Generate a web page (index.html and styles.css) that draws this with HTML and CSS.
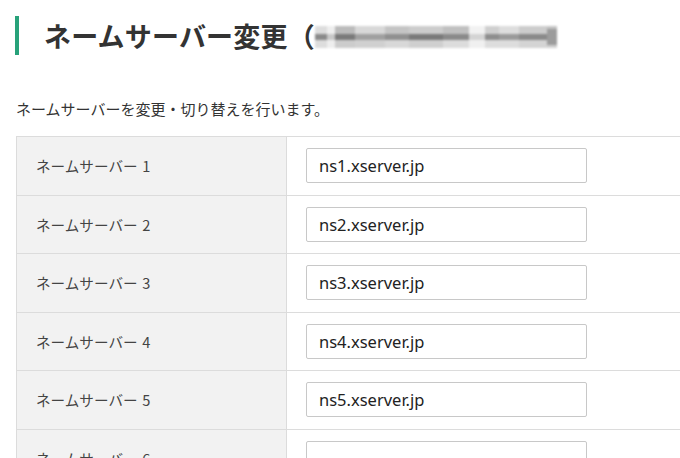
FILE: index.html
```html
<!DOCTYPE html>
<html lang="ja">
<head>
<meta charset="utf-8">
<link rel="stylesheet" href="styles.css">
</head>
<body>
<div class="page">
  <h1 class="title">
    <span class="title-text">ネームサーバー変更（</span><span class="mosaic" aria-hidden="true"><i class="m1"></i><i class="m2"></i><i class="m3"></i><i class="m4"></i><i class="m5"></i><i class="m6"></i><i class="m7"></i><i class="m8"></i><i class="m9"></i><i class="m10"></i><i class="m11"></i><i class="m12"></i></span>
  </h1>
  <p class="lead">ネームサーバーを変更・切り替えを行います。</p>
  <table class="ns-table">
    <tr><th>ネームサーバー 1</th><td><input class="ns-input" type="text" value="ns1.xserver.jp"></td></tr>
    <tr><th>ネームサーバー 2</th><td><input class="ns-input" type="text" value="ns2.xserver.jp"></td></tr>
    <tr><th>ネームサーバー 3</th><td><input class="ns-input" type="text" value="ns3.xserver.jp"></td></tr>
    <tr><th>ネームサーバー 4</th><td><input class="ns-input" type="text" value="ns4.xserver.jp"></td></tr>
    <tr><th>ネームサーバー 5</th><td><input class="ns-input" type="text" value="ns5.xserver.jp"></td></tr>
    <tr><th>ネームサーバー 6</th><td><input class="ns-input" type="text" value=""></td></tr>
  </table>
</div>
</body>
</html>
```
FILE: styles.css
```css
html, body {
  margin: 0;
  padding: 0;
  background: #fff;
  overflow: hidden;
}
body {
  font-family: "Noto Sans CJK JP", "Noto Sans", sans-serif;
  color: #333;
}
.page {
  padding: 16px 0 0 16px;
  width: 700px;
}
.title {
  margin: 0;
  display: flex;
  align-items: center;
  height: 39px;
  border-left: 4px solid #27a27a;
  margin-left: -1px;
  padding-left: 25px;
  font-size: 27px;
  font-weight: 700;
  color: #333;
  letter-spacing: 0.2px;
}
.title-text {
  line-height: 39px;
}
.mosaic {
  display: flex;
  height: 22px;
  margin-top: 2px;
  margin-left: 0;
  filter: blur(1.2px);
}
.mosaic i {
  display: block;
  height: 100%;
}
.mosaic .m1 { width: 12px; background: linear-gradient(#ddd 0 35%, #8a8a8a 35% 65%, #ddd 65%); }
.mosaic .m2 { width: 8px; background: linear-gradient(#eee 0 35%, #c8c8c8 35% 65%, #eee 65%); }
.mosaic .m3 { width: 20px; background: linear-gradient(#bbb 0 35%, #7a7a7a 35% 65%, #ccc 65%); }
.mosaic .m4 { width: 30px; background: linear-gradient(#d8d8d8 0 35%, #a0a0a0 35% 65%, #d0d0d0 65%); }
.mosaic .m5 { width: 24px; background: linear-gradient(#c4c4c4 0 35%, #909090 35% 65%, #d8d8d8 65%); }
.mosaic .m6 { width: 34px; background: linear-gradient(#ccc 0 35%, #7a7a7a 35% 65%, #cfcfcf 65%); }
.mosaic .m7 { width: 26px; background: linear-gradient(#c0c0c0 0 35%, #8a8a8a 35% 65%, #dcdcdc 65%); }
.mosaic .m8 { width: 16px; background: linear-gradient(#f2f2f2 0 35%, #d4d4d4 35% 65%, #f0f0f0 65%); }
.mosaic .m9 { width: 14px; background: linear-gradient(#cfcfcf 0 35%, #8e8e8e 35% 65%, #ddd 65%); }
.mosaic .m10 { width: 20px; background: linear-gradient(#ddd 0 35%, #9a9a9a 35% 65%, #ddd 65%); }
.mosaic .m11 { width: 28px; background: linear-gradient(#ccc 0 35%, #8a8a8a 35% 65%, #d4d4d4 65%); }
.mosaic .m12 { width: 10px; background: linear-gradient(#c4c4c4 0 15%, #9c9c9c 15% 85%, #d0d0d0 85%); }
.lead {
  margin: 43px 0 0;
  font-size: 15px;
  line-height: 22px;
  color: #333;
}
.ns-table {
  margin-top: 16px;
  width: 680px;
  border-collapse: collapse;
  border-top: 1px solid #dcdcdc;
}
.ns-table tr {
  height: 58.5px;
}
.ns-table th,
.ns-table td {
  border: 1px solid #dcdcdc;
  padding: 0;
  vertical-align: middle;
}
.ns-table th {
  width: 250px;
  padding-left: 19px;
  text-align: left;
  font-weight: 400;
  font-size: 14.6px;
  word-spacing: 1.5px;
  color: #444;
  background: #f2f2f2;
}
.ns-table td {
  padding-left: 19px;
}
.ns-input {
  display: block;
  box-sizing: border-box;
  width: 281px;
  height: 35px;
  margin: 0;
  padding: 0 12px;
  border: 1px solid #c8c8c8;
  border-radius: 2px;
  font-family: "Noto Sans", "Liberation Sans", sans-serif;
  font-size: 16.5px;
  color: #222;
  background: #fff;
  outline: none;
}
```
